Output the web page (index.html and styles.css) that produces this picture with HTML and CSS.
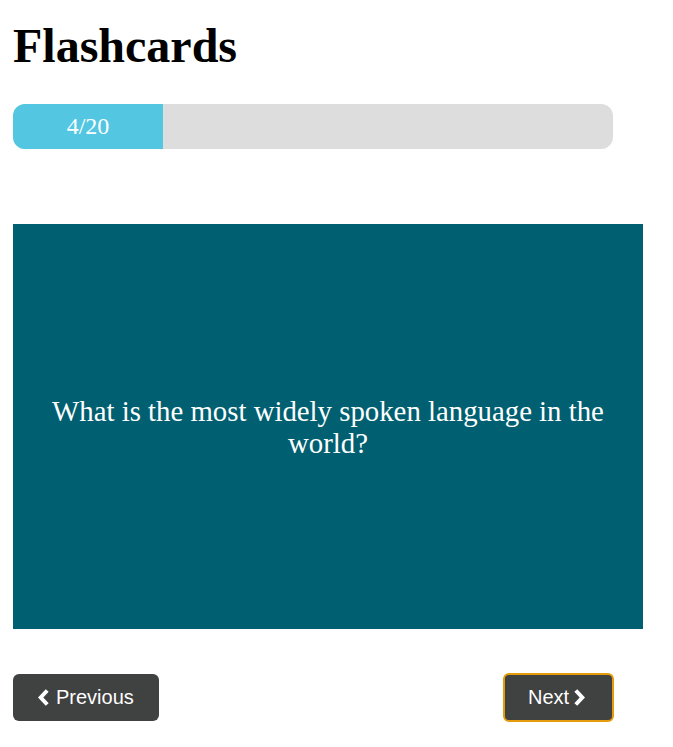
FILE: index.html
```html
<!DOCTYPE html>
<html>
<head>
<meta charset="utf-8">
<link rel="stylesheet" href="styles.css">
</head>
<body>
<div class="app">
  <h1 class="title">Flashcards</h1>
  <div class="progress">
    <div class="progress-fill" style="width: 25%;">4/20</div>
  </div>
  <div class="card">
    <p class="question">What is the most widely spoken language in the world?</p>
  </div>
  <div class="nav">
    <button class="btn btn-prev">
      <svg class="chev" viewBox="0 0 11 17" width="11" height="17"><path d="M9.2 1.5 L2.7 8.5 L9.2 15.5" fill="none" stroke="#fff" stroke-width="4" stroke-linejoin="miter" stroke-linecap="butt"/></svg>
      <span>Previous</span>
    </button>
    <button class="btn btn-next">
      <span>Next</span>
      <svg class="chev" viewBox="0 0 11 17" width="11" height="17"><path d="M1.8 1.5 L8.3 8.5 L1.8 15.5" fill="none" stroke="#fff" stroke-width="4" stroke-linejoin="miter" stroke-linecap="butt"/></svg>
    </button>
  </div>
</div>
</body>
</html>
```
FILE: styles.css
```css
html, body {
  margin: 0;
  padding: 0;
  background: #ffffff;
}
body {
  font-family: "Liberation Serif", "Times New Roman", serif;
}
.app {
  padding: 18px 13px 0 13px;
}
.title {
  margin: 0;
  font-size: 48px;
  font-weight: bold;
  line-height: 55px;
  color: #000;
}
.progress {
  margin-top: 31px;
  width: 600px;
  height: 45px;
  background: #dddddd;
  border-radius: 12px;
  overflow: hidden;
  display: flex;
}
.progress-fill {
  background: #53c6e2;
  color: #fff;
  font-size: 24px;
  display: flex;
  align-items: center;
  justify-content: center;
}
.card {
  margin-top: 75px;
  width: 630px;
  height: 405px;
  background: #005f70;
  display: flex;
  align-items: center;
  justify-content: center;
  padding: 0 20px;
  box-sizing: border-box;
}
.question {
  margin: 0;
  color: #fff;
  font-size: 28.8px;
  line-height: 32px;
  text-align: center;
}
.nav {
  margin-top: 44px;
  width: 601px;
  display: flex;
  justify-content: space-between;
  align-items: center;
}
.btn {
  font-family: "Liberation Sans", Arial, sans-serif;
  font-size: 20px;
  color: #fff;
  background: #404141;
  border-radius: 6px;
  display: flex;
  align-items: center;
  box-sizing: border-box;
}
.btn-prev {
  border: none;
  height: 47px;
  width: 146px;
  padding: 0 0 0 25px;
  gap: 7px;
}
.btn-next {
  border: 2px solid #e59c0c;
  height: 49px;
  width: 111px;
  padding: 0 0 0 23px;
  gap: 5px;
}
.chev {
  display: block;
}
```
